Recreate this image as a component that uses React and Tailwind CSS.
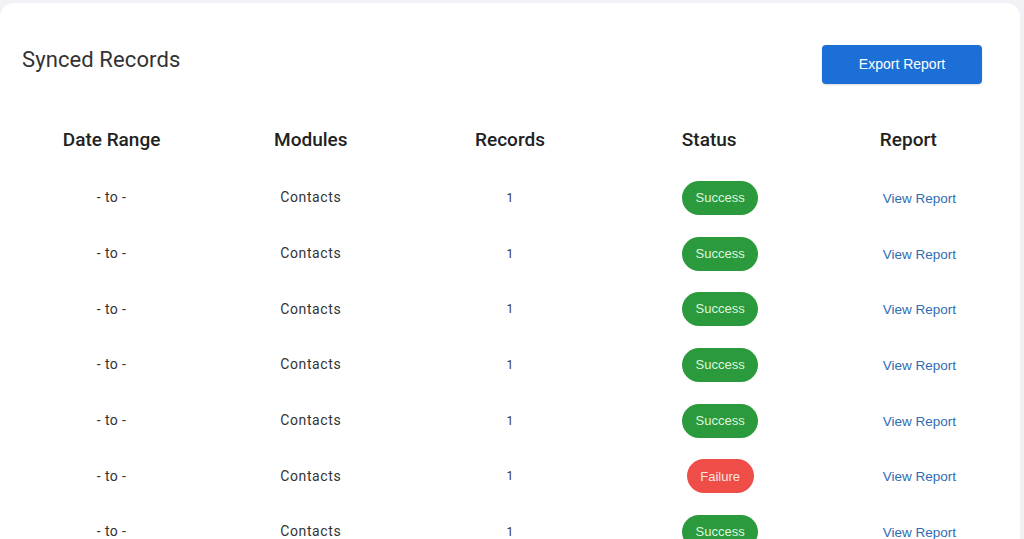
import React from 'react';

const rows = [
  { status: 'Success' },
  { status: 'Success' },
  { status: 'Success' },
  { status: 'Success' },
  { status: 'Success' },
  { status: 'Failure' },
  { status: 'Success' },
];

const columns = ['Date Range', 'Modules', 'Records', 'Status', 'Report'];

const StatusPill = ({ status }) => {
  const ok = status === 'Success';
  return (
    <span
      className={`inline-flex items-center justify-center h-[34px] rounded-full text-[13px] font-['Liberation_Sans',Arial,sans-serif] ${
        ok ? 'w-[76px] bg-[#2b9a3c] text-[#dff5df]' : 'w-[67px] bg-[#ee4d48] text-[#fde4e2]'
      }`}
    >
      {status}
    </span>
  );
};

const App = () => {
  return (
    <div className="w-[1024px] h-[539px] overflow-hidden bg-[#f1f1f6] pt-[3px] font-['Roboto',sans-serif]">
      <div className="w-[1020px] h-[600px] bg-white rounded-t-[14px]">
        {/* Title & Export */}
        <div className="h-[109px] flex items-start justify-between pl-[22px] pr-[38px] pt-[42px]">
          <h1 className="text-[22px] leading-[30px] text-[#333] tracking-[0.1px]">Synced Records</h1>
          <button className="w-[160px] h-[39px] rounded-[4px] bg-[#1b6fd6] text-white text-[14px] font-['Liberation_Sans',Arial,sans-serif] shadow-[0_1px_2px_rgba(0,0,0,0.15)]">
            Export Report
          </button>
        </div>

        {/* Table */}
        <div className="ml-[12px] w-[996px]">
          <div className="grid grid-cols-5 h-[57px] items-center text-center">
            {columns.map((c) => (
              <div key={c} className="text-[19px] font-medium text-[#222]">{c}</div>
            ))}
          </div>
          {rows.map((r, i) => (
            <div key={i} className="grid grid-cols-5 h-[55.7px] items-center text-center pt-[2px]">
              <div className="text-[14px] text-[#333] tracking-[0.4px]">- to -</div>
              <div className="text-[14px] text-[#333] tracking-[0.6px]">Contacts</div>
              <div className="text-[12px] text-[#333]">1</div>
              <div className="pl-[22px]">
                <StatusPill status={r.status} />
              </div>
              <div className="pl-[22px]">
                <a className="text-[13.5px] text-[#2f6db3] font-['Liberation_Sans',Arial,sans-serif] cursor-pointer">
                  View Report
                </a>
              </div>
            </div>
          ))}
        </div>
      </div>
    </div>
  );
};

export default App;
